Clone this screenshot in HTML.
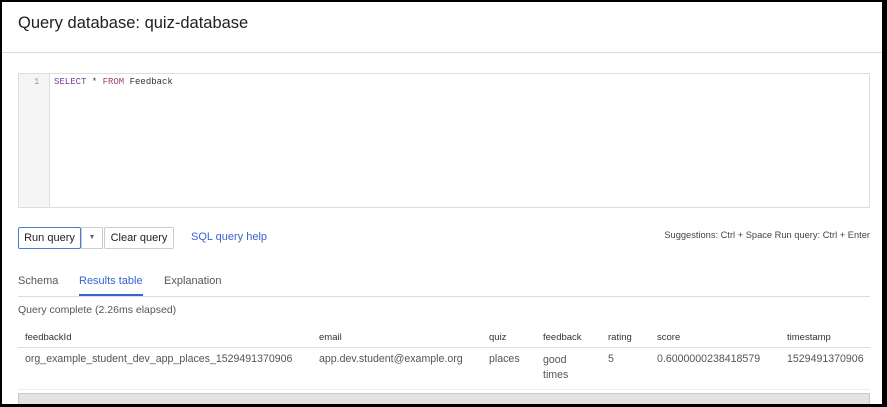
<!DOCTYPE html>
<html><head><style>
body{margin:0;width:887px;height:407px;overflow:hidden;background:#000;font-family:"Liberation Sans",Arial,sans-serif;}
.pg{position:absolute;left:2px;top:2px;width:880px;height:402px;background:#fff;overflow:hidden}
.a{position:absolute;white-space:nowrap}
</style></head><body>
<div class="pg">
<div class="a" style="left:16px;top:12px;font-size:16.5px;color:#202124">Query database: quiz-database</div>
<div class="a" style="left:0;top:50px;width:880px;height:1px;background:#dadce0"></div>
<div class="a" style="left:16px;top:71px;width:852px;height:135px;border:1px solid #ddd;box-sizing:border-box"></div>
<div class="a" style="left:17px;top:72px;width:30px;height:133px;background:#f5f5f5;border-right:1px solid #ddd"></div>
<div class="a" style="left:32px;top:75px;font-size:9px;font-family:'Liberation Mono',monospace;color:#999">1</div>
<div class="a" style="left:52px;top:75px;font-size:9px;font-family:'Liberation Mono',monospace;color:#333"><span style="color:#7a3e9d">SELECT</span> * <span style="color:#a0407a">FROM</span> Feedback</div>
<div class="a" style="left:16px;top:225px;width:63px;height:22px;border:1px solid #4a7ad9;box-sizing:border-box;border-radius:2px;font-size:11px;line-height:20px;text-align:center;color:#202124">Run query</div>
<div class="a" style="left:79px;top:225px;width:22px;height:22px;border:1px solid #ccc;box-sizing:border-box;text-align:center;font-size:7px;line-height:20px;color:#666">▼</div>
<div class="a" style="left:102px;top:225px;width:70px;height:22px;border:1px solid #ccc;box-sizing:border-box;border-radius:2px;font-size:11px;line-height:20px;text-align:center;color:#202124">Clear query</div>
<div class="a" style="left:189px;top:229px;font-size:11px;color:#3b62d6">SQL query help</div>
<div class="a" style="right:12px;top:228px;font-size:9.3px;color:#444">Suggestions: Ctrl + Space Run query: Ctrl + Enter</div>
<div class="a" style="left:16px;top:273px;font-size:11px;color:#555">Schema</div>
<div class="a" style="left:77px;top:273px;font-size:11px;color:#3b62d6">Results table</div>
<div class="a" style="left:77px;top:292px;width:64px;height:2px;background:#3b62d6"></div>
<div class="a" style="left:162px;top:273px;font-size:11px;color:#555">Explanation</div>
<div class="a" style="left:16px;top:294px;width:852px;height:1px;background:#ddd"></div>
<div class="a" style="left:16px;top:302px;font-size:10.5px;color:#555">Query complete (2.26ms elapsed)</div>
<div style="font-size:9.5px;color:#333">
<div class="a" style="left:23px;top:330px">feedbackId</div>
<div class="a" style="left:317px;top:330px">email</div>
<div class="a" style="left:487px;top:330px">quiz</div>
<div class="a" style="left:541px;top:330px">feedback</div>
<div class="a" style="left:606px;top:330px">rating</div>
<div class="a" style="left:655px;top:330px">score</div>
<div class="a" style="left:785px;top:330px">timestamp</div>
</div>
<div class="a" style="left:16px;top:345px;width:852px;height:1px;background:#ddd"></div>
<div style="font-size:10.6px;color:#555">
<div class="a" style="left:23px;top:351px">org_example_student_dev_app_places_1529491370906</div>
<div class="a" style="left:317px;top:351px">app.dev.student@example.org</div>
<div class="a" style="left:487px;top:351px">places</div>
<div class="a" style="left:541px;top:351px;line-height:15px">good<br>times</div>
<div class="a" style="left:606px;top:351px">5</div>
<div class="a" style="left:655px;top:351px">0.6000000238418579</div>
<div class="a" style="left:785px;top:351px">1529491370906</div>
</div>
<div class="a" style="left:16px;top:387px;width:852px;height:1px;background:#eee"></div>
<div class="a" style="left:16px;top:391px;width:852px;height:12px;background:#e3e3e3;border:1px solid #ccc;box-sizing:border-box"></div>
</div>
</body></html>
